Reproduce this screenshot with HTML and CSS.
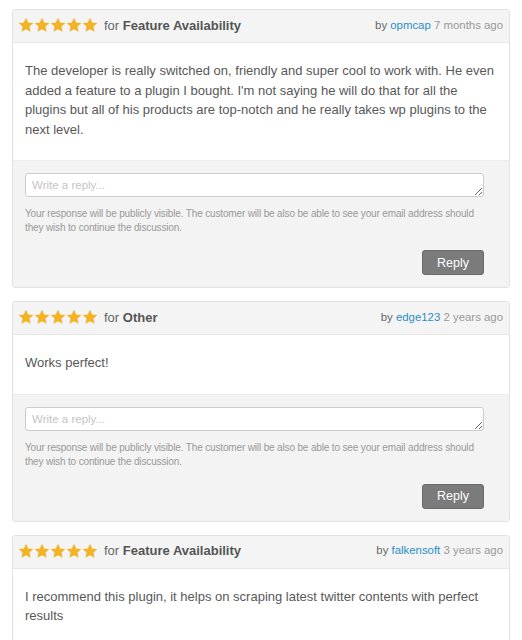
FILE: index.html
```html
<!DOCTYPE html>
<html>
<head>
<meta charset="utf-8">
<link rel="stylesheet" href="styles.css">
</head>
<body>
<div class="reviews">

  <div class="review">
    <div class="review-head">
      <div class="rating">
        <span class="stars">
          <svg viewBox="0 0 16 16"><path d="M8 0.8l2.2 4.7 5.1.6-3.8 3.5 1 5.1L8 12.2l-4.5 2.5 1-5.1L.7 6.1l5.1-.6z"/></svg>
          <svg viewBox="0 0 16 16"><path d="M8 0.8l2.2 4.7 5.1.6-3.8 3.5 1 5.1L8 12.2l-4.5 2.5 1-5.1L.7 6.1l5.1-.6z"/></svg>
          <svg viewBox="0 0 16 16"><path d="M8 0.8l2.2 4.7 5.1.6-3.8 3.5 1 5.1L8 12.2l-4.5 2.5 1-5.1L.7 6.1l5.1-.6z"/></svg>
          <svg viewBox="0 0 16 16"><path d="M8 0.8l2.2 4.7 5.1.6-3.8 3.5 1 5.1L8 12.2l-4.5 2.5 1-5.1L.7 6.1l5.1-.6z"/></svg>
          <svg viewBox="0 0 16 16"><path d="M8 0.8l2.2 4.7 5.1.6-3.8 3.5 1 5.1L8 12.2l-4.5 2.5 1-5.1L.7 6.1l5.1-.6z"/></svg>
        </span>
        <span class="for">for <strong>Feature Availability</strong></span>
      </div>
      <div class="meta">by <a href="#">opmcap</a> <span class="time">7 months ago</span></div>
    </div>
    <div class="review-body">
      <p>The developer is really switched on, friendly and super cool to work with. He even added a feature to a plugin I bought. I'm not saying he will do that for all the plugins but all of his products are top-notch and he really takes wp plugins to the next level.</p>
    </div>
    <div class="review-reply">
      <textarea placeholder="Write a reply..."></textarea>
      <p class="notice">Your response will be publicly visible. The customer will be also be able to see your email address should they wish to continue the discussion.</p>
      <div class="actions"><button class="btn">Reply</button></div>
    </div>
  </div>

  <div class="review">
    <div class="review-head">
      <div class="rating">
        <span class="stars">
          <svg viewBox="0 0 16 16"><path d="M8 0.8l2.2 4.7 5.1.6-3.8 3.5 1 5.1L8 12.2l-4.5 2.5 1-5.1L.7 6.1l5.1-.6z"/></svg>
          <svg viewBox="0 0 16 16"><path d="M8 0.8l2.2 4.7 5.1.6-3.8 3.5 1 5.1L8 12.2l-4.5 2.5 1-5.1L.7 6.1l5.1-.6z"/></svg>
          <svg viewBox="0 0 16 16"><path d="M8 0.8l2.2 4.7 5.1.6-3.8 3.5 1 5.1L8 12.2l-4.5 2.5 1-5.1L.7 6.1l5.1-.6z"/></svg>
          <svg viewBox="0 0 16 16"><path d="M8 0.8l2.2 4.7 5.1.6-3.8 3.5 1 5.1L8 12.2l-4.5 2.5 1-5.1L.7 6.1l5.1-.6z"/></svg>
          <svg viewBox="0 0 16 16"><path d="M8 0.8l2.2 4.7 5.1.6-3.8 3.5 1 5.1L8 12.2l-4.5 2.5 1-5.1L.7 6.1l5.1-.6z"/></svg>
        </span>
        <span class="for">for <strong>Other</strong></span>
      </div>
      <div class="meta">by <a href="#">edge123</a> <span class="time">2 years ago</span></div>
    </div>
    <div class="review-body">
      <p>Works perfect!</p>
    </div>
    <div class="review-reply">
      <textarea placeholder="Write a reply..."></textarea>
      <p class="notice">Your response will be publicly visible. The customer will be also be able to see your email address should they wish to continue the discussion.</p>
      <div class="actions"><button class="btn">Reply</button></div>
    </div>
  </div>

  <div class="review">
    <div class="review-head">
      <div class="rating">
        <span class="stars">
          <svg viewBox="0 0 16 16"><path d="M8 0.8l2.2 4.7 5.1.6-3.8 3.5 1 5.1L8 12.2l-4.5 2.5 1-5.1L.7 6.1l5.1-.6z"/></svg>
          <svg viewBox="0 0 16 16"><path d="M8 0.8l2.2 4.7 5.1.6-3.8 3.5 1 5.1L8 12.2l-4.5 2.5 1-5.1L.7 6.1l5.1-.6z"/></svg>
          <svg viewBox="0 0 16 16"><path d="M8 0.8l2.2 4.7 5.1.6-3.8 3.5 1 5.1L8 12.2l-4.5 2.5 1-5.1L.7 6.1l5.1-.6z"/></svg>
          <svg viewBox="0 0 16 16"><path d="M8 0.8l2.2 4.7 5.1.6-3.8 3.5 1 5.1L8 12.2l-4.5 2.5 1-5.1L.7 6.1l5.1-.6z"/></svg>
          <svg viewBox="0 0 16 16"><path d="M8 0.8l2.2 4.7 5.1.6-3.8 3.5 1 5.1L8 12.2l-4.5 2.5 1-5.1L.7 6.1l5.1-.6z"/></svg>
        </span>
        <span class="for">for <strong>Feature Availability</strong></span>
      </div>
      <div class="meta">by <a href="#">falkensoft</a> <span class="time">3 years ago</span></div>
    </div>
    <div class="review-body">
      <p>I recommend this plugin, it helps on scraping latest twitter contents with perfect results</p>
    </div>
    <div class="review-reply">
      <textarea placeholder="Write a reply..."></textarea>
      <p class="notice">Your response will be publicly visible. The customer will be also be able to see your email address should they wish to continue the discussion.</p>
      <div class="actions"><button class="btn">Reply</button></div>
    </div>
  </div>

</div>
</body>
</html>
```

FILE: styles.css
```css
* { box-sizing: border-box; }

html, body {
  margin: 0;
  padding: 0;
  background: #fff;
}

body {
  font-family: "Liberation Sans", Arial, sans-serif;
  color: #555;
}

.reviews {
  padding: 9px 12px;
  display: flex;
  flex-direction: column;
  gap: 13px;
}

.review {
  border: 1px solid #e2e2e2;
  border-radius: 3px;
  overflow: hidden;
}

.review-head {
  display: flex;
  justify-content: space-between;
  align-items: center;
  height: 33px;
  padding: 0 6px 2px 5px;
  background: #f4f4f4;
  border-bottom: 1px solid #e8e8e8;
}

.rating {
  display: flex;
  align-items: center;
  gap: 6px;
}

.stars {
  display: flex;
}

.stars svg {
  width: 16px;
  height: 16px;
  fill: #f3b328;
}

.for {
  font-size: 13px;
  color: #666;
}

.for strong {
  color: #555;
}

.meta {
  font-size: 11.4px;
  color: #666;
  margin-top: -1px;
}

.meta a {
  color: #2b8ec4;
  text-decoration: none;
}

.meta .time {
  color: #999;
}

.review-body {
  padding: 18px 12px 21px 12px;
  background: #fff;
}

.review-body p {
  margin: 0;
  font-size: 13px;
  line-height: 19.5px;
  color: #585858;
}

.review-reply {
  background: #f3f3f3;
  border-top: 1px solid #ececec;
  padding: 12px 25px 12px 12px;
}

.review-reply textarea {
  display: block;
  width: 100%;
  height: 24px;
  margin: 0;
  padding: 3px 6px;
  border: 1px solid #ccc;
  border-radius: 3px;
  background: #fff;
  font-family: "Liberation Sans", Arial, sans-serif;
  font-size: 11.5px;
  line-height: 16px;
  color: #555;
  resize: vertical;
}

.review-reply textarea::placeholder {
  color: #c4c4c4;
}

.notice {
  margin: 10px 0 0;
  font-size: 10px;
  letter-spacing: -0.15px;
  line-height: 14px;
  color: #999;
}

.actions {
  display: flex;
  justify-content: flex-end;
  margin-top: 15px;
}

.btn {
  width: 62px;
  height: 25px;
  padding: 0;
  border: 1px solid #6a6a6a;
  border-radius: 3px;
  background: #7b7b7b;
  color: #fff;
  font-family: "Liberation Sans", Arial, sans-serif;
  font-size: 12.5px;
}
```
